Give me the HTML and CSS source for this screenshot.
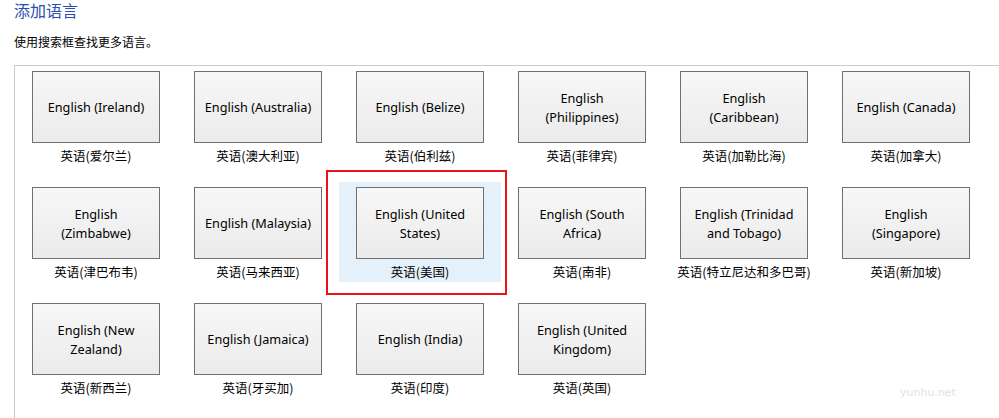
FILE: index.html
```html
<!DOCTYPE html>
<html lang="zh-CN">
<head>
  <meta charset="UTF-8">
  <title>添加语言</title>
  <link rel="stylesheet" href="styles.css">
</head>
<body>

  <h1 class="title">添加语言</h1>
  <p class="hint">使用搜索框查找更多语言。</p>

  <div class="panel">
    <div class="grid">
      <div class="tile"><div class="tile-btn">English (Ireland)</div><div class="tile-label">英语(爱尔兰)</div></div>
      <div class="tile"><div class="tile-btn">English (Australia)</div><div class="tile-label">英语(澳大利亚)</div></div>
      <div class="tile"><div class="tile-btn">English (Belize)</div><div class="tile-label">英语(伯利兹)</div></div>
      <div class="tile"><div class="tile-btn">English (Philippines)</div><div class="tile-label">英语(菲律宾)</div></div>
      <div class="tile"><div class="tile-btn">English (Caribbean)</div><div class="tile-label">英语(加勒比海)</div></div>
      <div class="tile"><div class="tile-btn">English (Canada)</div><div class="tile-label">英语(加拿大)</div></div>

      <div class="tile"><div class="tile-btn">English (Zimbabwe)</div><div class="tile-label">英语(津巴布韦)</div></div>
      <div class="tile"><div class="tile-btn">English (Malaysia)</div><div class="tile-label">英语(马来西亚)</div></div>
      <div class="tile selected">
        <div class="tile-btn">English (United States)</div><div class="tile-label">英语(美国)</div>
        <div class="mark"></div>
      </div>
      <div class="tile"><div class="tile-btn">English (South Africa)</div><div class="tile-label">英语(南非)</div></div>
      <div class="tile"><div class="tile-btn">English (Trinidad and Tobago)</div><div class="tile-label">英语(特立尼达和多巴哥)</div></div>
      <div class="tile"><div class="tile-btn">English (Singapore)</div><div class="tile-label">英语(新加坡)</div></div>

      <div class="tile"><div class="tile-btn">English (New Zealand)</div><div class="tile-label">英语(新西兰)</div></div>
      <div class="tile"><div class="tile-btn">English (Jamaica)</div><div class="tile-label">英语(牙买加)</div></div>
      <div class="tile"><div class="tile-btn">English (India)</div><div class="tile-label">英语(印度)</div></div>
      <div class="tile"><div class="tile-btn">English (United Kingdom)</div><div class="tile-label">英语(英国)</div></div>
    </div>
  </div>

  <div class="watermark">yunhu.net</div>

</body>
</html>
```

FILE: styles.css
```css
body {
  margin: 0;
  padding: 0;
  background-color: #fff;
  font-family: "Noto Sans", "Noto Sans CJK SC", sans-serif;
  color: #000;
  height: 418px;
  overflow: hidden;
  position: relative;
}

.title {
  margin: 0;
  padding: 0 14px;
  font-family: "Noto Sans CJK SC", sans-serif;
  font-size: 16px;
  font-weight: normal;
  line-height: 20px;
  color: #2a4fae;
}

.hint {
  margin: 14px 14px 0;
  font-family: "Noto Sans CJK SC", sans-serif;
  font-size: 12px;
  line-height: 16px;
}

.panel {
  margin: 15px 0 0 14px;
  border-top: 1px solid #cacaca;
  border-left: 1px solid #cacaca;
  height: 352px;
}

.grid {
  display: grid;
  grid-template-columns: repeat(6, 162px);
  row-gap: 16px;
}

.tile {
  position: relative;
  height: 100px;
  padding-top: 5px;
  box-sizing: border-box;
  display: flex;
  flex-direction: column;
  align-items: center;
}

.tile-btn {
  width: 128px;
  height: 72px;
  box-sizing: border-box;
  border: 1px solid #707070;
  background: linear-gradient(#f7f7f7, #ebebeb);
  display: flex;
  align-items: center;
  justify-content: center;
  text-align: center;
  padding: 1px 8px 0;
  font-size: 12.7px;
  line-height: 19px;
}

.tile-label {
  margin-top: 5px;
  font-family: "Noto Sans CJK SC", sans-serif;
  font-size: 12.5px;
  line-height: 16px;
}

.selected {
  background-color: #e4f1fb;
}

.mark {
  position: absolute;
  left: -13px;
  top: -12px;
  width: 181px;
  height: 125px;
  box-sizing: border-box;
  border: 2px solid #e8141c;
}

.watermark {
  position: absolute;
  left: 900px;
  top: 386px;
  font-family: "DejaVu Sans", sans-serif;
  font-size: 11px;
  color: #e2e2e2;
}
```
